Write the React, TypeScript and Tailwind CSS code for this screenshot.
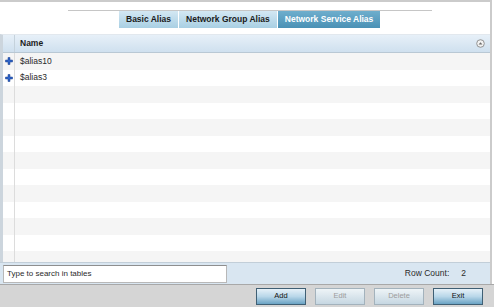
const rows = ["$alias10", "$alias3", "", "", "", "", "", "", "", "", "", "", "", ""];

function PlusIcon() {
  return (
    <svg width="8" height="8" viewBox="0 0 8 8">
      <path d="M3 0.5h2v2.5h2.5v2H5v2.5H3V5H0.5V3H3z" fill="#2d63c8" stroke="#1b3f8a" strokeWidth="0.5" />
    </svg>
  );
}

function SortIcon() {
  return (
    <svg width="9" height="9" viewBox="0 0 9 9">
      <circle cx="4.5" cy="4.5" r="3.8" fill="#f2f2f2" stroke="#8a8a8a" strokeWidth="0.9" />
      <path d="M2.6 5.6L4.5 3.2L6.4 5.6z" fill="#6a6a6a" />
    </svg>
  );
}

function Tab({ label, active }: { label: string; active?: boolean }) {
  return (
    <div
      className={
        active
          ? "h-full px-[7px] flex items-center text-[8.5px] font-bold text-white bg-gradient-to-b from-[#6eaecd] to-[#4a91b5]"
          : "h-full px-[7px] flex items-center text-[8.5px] font-bold text-[#1b1b1b] bg-gradient-to-b from-[#d3e8f3] to-[#a9cfe3] border-r border-white"
      }
    >
      {label}
    </div>
  );
}

function Button({ label, disabled }: { label: string; disabled?: boolean }) {
  return (
    <div
      className={
        disabled
          ? "w-[50px] h-[17px] flex items-center justify-center text-[7.5px] text-[#9c9c9c] border border-[#a3b2bc] bg-gradient-to-b from-[#eef4f7] to-[#c6d7e2]"
          : "w-[50px] h-[17px] flex items-center justify-center text-[7.5px] text-[#111] border border-[#3f5f74] bg-gradient-to-b from-[#e6f1f8] via-[#b9d7e9] to-[#6aa3c4]"
      }
    >
      {label}
    </div>
  );
}

export default function App() {
  return (
    <div className="w-[494px] h-[307px] bg-white flex flex-col overflow-hidden font-['Liberation_Sans',Arial,sans-serif]">
      <div className="flex-1 flex flex-col mr-[2px] border-t-2 border-r-2 border-[#cbcbcb] min-h-0">
        <div className="h-[32px] shrink-0 flex flex-col">
          <div className="mt-[8px] ml-[68px] w-[364px] h-px bg-[#c6c6c6]" />
          <div className="ml-[119px] h-[17px] flex">
            <Tab label="Basic Alias" />
            <Tab label="Network Group Alias" />
            <Tab label="Network Service Alias" active />
          </div>
        </div>

        <div className="flex-1 min-h-0 flex flex-col border-l-[3px] border-[#ccd5dd] border-t border-t-[#e2e8ee]">
          <div className="h-[18px] shrink-0 flex bg-gradient-to-b from-[#e7f0f8] to-[#cfe0ef] border-b border-[#b9c8d4]">
            <div className="w-[12px] border-r border-[#c5d2dc]" />
            <div className="flex-1 flex items-center pl-[5px] text-[8.5px] font-bold text-[#1c1c1c]">Name</div>
            <div className="w-[20px] flex items-center justify-center">
              <SortIcon />
            </div>
          </div>
          <div className="flex-1 min-h-0 overflow-hidden">
            {rows.map((r, i) => (
              <div key={i} className={"h-[16.5px] flex " + (i % 2 === 0 ? "bg-[#f5f5f5]" : "bg-white")}>
                <div className="w-[12px] flex items-center justify-center border-r border-[#dcdcdc]">
                  {r && <PlusIcon />}
                </div>
                <div className="flex-1 flex items-center pl-[5px] text-[8.5px] text-[#2a2a2a]">{r}</div>
              </div>
            ))}
          </div>
        </div>

        <div className="h-[22px] shrink-0 flex items-center bg-[#d9e6f1] border-t border-[#c2ced8]">
          <div className="ml-[3px] w-[224px] h-[18px] bg-white border border-[#b8b8b8] border-t-[#8e8e8e] flex items-center pl-[3px] text-[8px] text-[#2b2b2b]">
            Type to search in tables
          </div>
          <div className="ml-auto mr-[24px] flex items-center text-[8.5px] text-[#2b2b2b]">
            <span>Row Count:</span>
            <span className="ml-[12px]">2</span>
          </div>
        </div>
      </div>

      <div className="h-[23px] shrink-0 flex items-center justify-end gap-[9px] pr-[11px] bg-[#d5d5d5] border-t border-[#a8a8a8]">
        <Button label="Add" />
        <Button label="Edit" disabled />
        <Button label="Delete" disabled />
        <Button label="Exit" />
      </div>
    </div>
  );
}
